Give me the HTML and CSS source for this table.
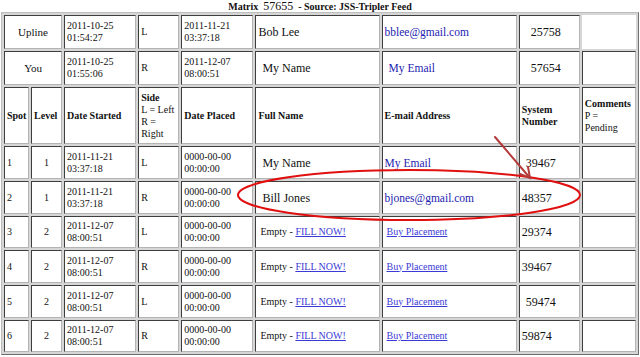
FILE: index.html
```html
<!DOCTYPE html>
<html>
<head>
<meta charset="utf-8">
<link rel="stylesheet" href="styles.css">
</head>
<body>
<div class="page">
  <div class="title"><b>Matrix</b>&nbsp;&nbsp;<span class="num">57655</span>&nbsp;&nbsp;<b>- Source: JSS-Tripler Feed</b></div>
  <table class="matrix">
    <colgroup>
      <col class="c-spot"><col class="c-level"><col class="c-ds"><col class="c-side"><col class="c-dp"><col class="c-name"><col class="c-mail"><col class="c-sys"><col class="c-com">
    </colgroup>
    <tr class="top">
      <td colspan="2" class="center big">Upline</td>
      <td>2011-10-25<br>01:54:27</td>
      <td>L</td>
      <td>2011-11-21<br>03:37:18</td>
      <td class="name">Bob Lee</td>
      <td class="mail">bblee@gmail.com</td>
      <td class="sys sys-c">25758</td>
      <td class="blank"></td>
    </tr>
    <tr class="top">
      <td colspan="2" class="center big">You</td>
      <td>2011-10-25<br>01:55:06</td>
      <td>R</td>
      <td>2011-12-07<br>08:00:51</td>
      <td class="name ind">My Name</td>
      <td class="mail ind">My Email</td>
      <td class="sys sys-c">57654</td>
      <td></td>
    </tr>
    <tr class="head">
      <th>Spot</th>
      <th>Level</th>
      <th>Date Started</th>
      <th>Side<br><span class="n">L = Left<br>R =<br>Right</span></th>
      <th>Date Placed</th>
      <th>Full Name</th>
      <th>E-mail Address</th>
      <th>System<br>Number</th>
      <th>Comments<br><span class="n">P =<br>Pending</span></th>
    </tr>
    <tr class="row">
      <td>1</td><td class="center">1</td>
      <td>2011-11-21<br>03:37:18</td><td>L</td>
      <td>0000-00-00<br>00:00:00</td>
      <td class="name ind">My Name</td>
      <td class="mail">My Email</td>
      <td class="sys ind">39467</td><td></td>
    </tr>
    <tr class="row">
      <td>2</td><td class="center">1</td>
      <td>2011-11-21<br>03:37:18</td><td>R</td>
      <td>0000-00-00<br>00:00:00</td>
      <td class="name ind">Bill Jones</td>
      <td class="mail">bjones@gmail.com</td>
      <td class="sys">48357</td><td></td>
    </tr>
    <tr class="row short">
      <td>3</td><td class="center">2</td>
      <td>2011-12-07<br>08:00:51</td><td>L</td>
      <td>0000-00-00<br>00:00:00</td>
      <td class="ind-s">Empty - <a href="#">FILL NOW!</a></td>
      <td class="ind-s"><a href="#">Buy Placement</a></td>
      <td class="sys">29374</td><td></td>
    </tr>
    <tr class="row">
      <td>4</td><td class="center">2</td>
      <td>2011-12-07<br>08:00:51</td><td>R</td>
      <td>0000-00-00<br>00:00:00</td>
      <td class="ind-s">Empty - <a href="#">FILL NOW!</a></td>
      <td class="ind-s"><a href="#">Buy Placement</a></td>
      <td class="sys">39467</td><td></td>
    </tr>
    <tr class="row">
      <td>5</td><td class="center">2</td>
      <td>2011-12-07<br>08:00:51</td><td>L</td>
      <td>0000-00-00<br>00:00:00</td>
      <td class="ind-s">Empty - <a href="#">FILL NOW!</a></td>
      <td class="ind-s"><a href="#">Buy Placement</a></td>
      <td class="sys ind">59474</td><td></td>
    </tr>
    <tr class="row short">
      <td>6</td><td class="center">2</td>
      <td>2011-12-07<br>08:00:51</td><td>R</td>
      <td>0000-00-00<br>00:00:00</td>
      <td class="ind-s">Empty - <a href="#">FILL NOW!</a></td>
      <td class="ind-s"><a href="#">Buy Placement</a></td>
      <td class="sys">59874</td><td></td>
    </tr>
  </table>
  <svg class="marks" width="640" height="357" viewBox="0 0 640 357">
    <ellipse cx="409" cy="195" rx="171" ry="25" fill="none" stroke="#e01010" stroke-width="2"/>
    <g stroke="#b43a3a" stroke-width="2" stroke-linecap="round" fill="none">
      <line x1="495" y1="137" x2="530" y2="178"/>
      <polyline points="520,174 530,178 528,167"/>
    </g>
  </svg>
</div>
</body>
</html>
```

FILE: styles.css
```css
html, body {
  margin: 0;
  padding: 0;
  background: #fff;
}
body {
  font-family: "Liberation Serif", "Times New Roman", serif;
  font-size: 10px;
  color: #111;
}
.page {
  position: relative;
  width: 640px;
  height: 357px;
  overflow: hidden;
}
.title {
  height: 12px;
  line-height: 12px;
  text-align: center;
  font-size: 10px;
  white-space: nowrap;
}
.title .num {
  font-size: 12px;
  line-height: 12px;
}
.matrix {
  margin-left: 1px;
  width: 638px;
  table-layout: fixed;
  border-collapse: separate;
  border-spacing: 2px;
  border: 1px solid;
  border-color: #bdbdbd #6f6f6f #6f6f6f #bdbdbd;
  background: #d6d6d6;
}
.c-spot { width: 25px; }
.c-level { width: 31px; }
.c-ds { width: 72px; }
.c-side { width: 41px; }
.c-dp { width: 72px; }
.c-name { width: 124px; }
.c-mail { width: 135px; }
.c-sys { width: 61px; }
.c-com { width: 54px; }
.matrix td,
.matrix th {
  box-sizing: border-box;
  background: #fff;
  border: 1px solid;
  border-color: #3e3e3e #b4b4b4 #b4b4b4 #3e3e3e;
  padding: 0 2px;
  vertical-align: middle;
  text-align: left;
  line-height: 12px;
  font-size: 10px;
}
.matrix th {
  font-weight: bold;
}
.matrix th .n {
  font-weight: normal;
}
.top td { height: 34px; }
.head th { height: 57px; }
.row td { height: 33px; }
.row.short td { height: 32px; }
.matrix td.blank {
  border-color: #fff;
  background: #fff;
}
.center { text-align: center !important; }
.big { font-size: 11px !important; }
.name { font-size: 12px !important; }
.mail { font-size: 11.5px !important; color: #1c1cb0; }
.sys { font-size: 12px !important; }
.sys-c { padding-left: 11px !important; }
.ind { padding-left: 6px !important; }
.ind-s { padding-left: 4px !important; }
a {
  color: #3a3ad6;
  text-decoration: underline;
}
.marks {
  position: absolute;
  left: 0;
  top: 0;
  pointer-events: none;
}
```
